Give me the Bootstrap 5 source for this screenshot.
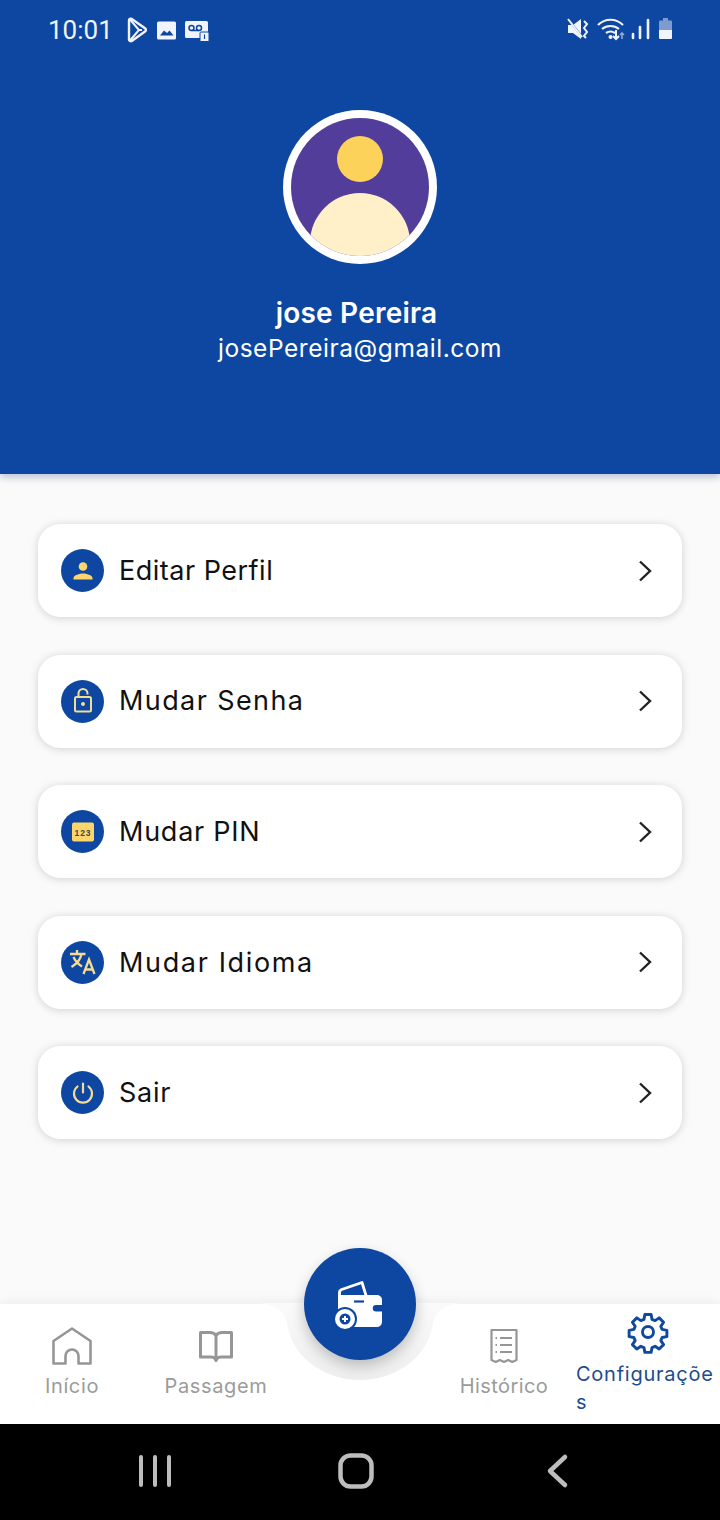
<!DOCTYPE html>
<html lang="pt">
<head>
  <meta charset="UTF-8">
  <meta name="viewport" content="width=device-width, initial-scale=1">
  <title>perfil</title>
  <link href="https://cdn.jsdelivr.net/npm/bootstrap@5.3.3/dist/css/bootstrap.min.css" rel="stylesheet">
  <style>
    body {
      background-color: #fafafa;
      font-family: "Inter", "Open Sans", sans-serif;
      width: 720px;
      height: 1520px;
      overflow: hidden;
    }
    .app-screen { height: 1520px; }
    .top-panel {
      background-color: #0d47a1;
      height: 474px;
      box-shadow: 0 3px 8px rgba(13, 40, 100, .28);
      color: #fff;
      flex: none;
    }
    .status-row {
      height: 60px;
      padding: 0 47px 0 48px;
    }
    .clock { font-family: "Roboto", sans-serif; font-size: 26px; color: #f1f4fa; line-height: 1; margin-right: 14px; }
    .avatar-ring {
      width: 154px;
      height: 154px;
      margin-top: 50px;
      margin-bottom: 30px;
      display: block;
    }
    .user-name { font-size: 28px; font-weight: 600; line-height: 38px; letter-spacing: .2px; padding-right: 7px; }
    .user-mail { font-size: 24.5px; line-height: 32px; letter-spacing: .55px; font-weight: 400; }
    .menu-area {
      padding: 50px 38px 0;
      gap: 37.6px;
    }
    .menu-card {
      height: 93px;
      border: 0;
      border-radius: 22px;
      background: #fff;
      box-shadow: 0 1px 8px rgba(0, 0, 0, .17);
      padding: 0 29px 0 23px;
    }
    .menu-dot {
      width: 43px;
      height: 43px;
      border-radius: 50%;
      background: #0d47a1;
      flex: none;
    }
    .menu-label { font-size: 27px; letter-spacing: .75px; color: #111; margin-left: 15px; padding-top: 1px; font-weight: 400; }
    .label-tight { letter-spacing: .5px; }
    .label-wide { letter-spacing: 1.4px; }
    .label-wider { letter-spacing: 1.65px; }
    .bottom-nav {
      height: 120px;
      background: #fff;
      box-shadow: 0 -3px 10px rgba(0, 0, 0, .05);
      flex: none;
    }
    .notch { position: absolute; left: 230px; top: -1px; width: 260px; height: 90px; }
    .fab {
      position: absolute;
      left: 304px;
      top: -56px;
      width: 112px;
      height: 112px;
      border-radius: 50%;
      background: #0d47a1;
      box-shadow: 0 6px 14px rgba(0, 0, 0, .22);
    }
    .nav-slot {
      width: 144px;
      padding-top: 20px;
      color: #9b9b9b;
      font-size: 20px;
      line-height: 28px;
      letter-spacing: .65px;
      text-align: center;
    }
    .nav-glyph { height: 44px; margin-bottom: 4px; }
    .slot-history { letter-spacing: .4px; }
    .slot-active { padding-top: 6px; color: #1c4c8f; text-align: left; letter-spacing: .75px; margin-bottom: 0; }
    .slot-active .nav-glyph { padding-left: 50px; justify-content: flex-start !important; margin-bottom: 6px; }
    .sys-bar {
      height: 96px;
      background: #000;
      flex: none;
    }
  </style>
</head>
<body>
<div class="app-screen d-flex flex-column">

<div class="top-panel d-flex flex-column align-items-center text-center">
  <!-- barra de status -->
  <div class="status-row d-flex align-items-center justify-content-between w-100">
    <div class="d-flex align-items-center">
      <span class="clock">10:01</span>
      <svg width="84" height="26" viewBox="0 0 84 26" fill="none">
        <path d="M2 3.500c0-1.500 1.500-2.300 2.800-1.600L18 11.300c1.200.7 1.200 2.500 0 3.200L4.800 24c-1.300.7-2.800-.1-2.800-1.600z" stroke="#f1f4fa" stroke-width="2.400" stroke-linejoin="round"/>
        <path d="M3 2.500L12 13 3 23.500M12 13h3" stroke="#f1f4fa" stroke-width="2"/>
        <rect x="30" y="4.500" width="19" height="18" rx="1.500" fill="#f1f4fa"/>
        <path d="M33 18.500l4-5 3 2.500 2.500-2.500 4 5z" fill="#0d47a1"/>
        <rect x="58" y="4" width="23" height="17" rx="1.500" fill="#f1f4fa"/>
        <circle cx="64.500" cy="11" r="2.500" fill="none" stroke="#0d47a1" stroke-width="1.500"/>
        <circle cx="72" cy="11" r="2.500" fill="none" stroke="#0d47a1" stroke-width="1.500"/>
        <path d="M64.500 13.500H72" stroke="#0d47a1" stroke-width="1.500"/>
        <rect x="73" y="15" width="9" height="9.500" rx="1" fill="#f1f4fa" stroke="#0d47a1"/>
        <path d="M77.500 17.500v4.500" stroke="#0d47a1" stroke-width="1.200"/>
      </svg>
    </div>
    <svg width="106" height="26" viewBox="0 1 106 26" fill="none">
      <path d="M1 9h5l8-6v20l-8-6H1z" fill="#f1f4fa"/>
      <path d="M1 3l16 20" stroke="#0d47a1" stroke-width="2"/>
      <path d="M1 3l14 18" stroke="#f1f4fa" stroke-width="2"/>
      <path d="M17 5l3 3-3 4 3 4-3 4 2 2" stroke="#f1f4fa" stroke-width="2"/>
      <path d="M31 9c7-7 18-7 25 0M35 13c5-4 12-4 17 0M39 17c3-2 6-2 9 0" stroke="#f1f4fa" stroke-width="2.200"/>
      <circle cx="43.500" cy="21" r="2" fill="#f1f4fa"/>
      <path d="M49 14v9m-3-3l3 3 3-3" stroke="#f1f4fa" stroke-width="2"/>
      <path d="M55 23v-6m-2 2l2-2 2 2" stroke="#8ea6d2" stroke-width="1.600"/>
      <path d="M66 18v4M73 11v11M81 4v18" stroke="#f1f4fa" stroke-width="2.600" stroke-linecap="round"/>
      <path d="M92 6c0-1 .5-1.500 1.500-1.500H96V2h5v2.500h2.500c1 0 1.500.5 1.500 1.500v8H92z" fill="#7f9bcd"/>
      <path d="M92 14h13v7.500c0 1-.5 1.500-1.500 1.500h-10c-1 0-1.500-.5-1.500-1.500z" fill="#f1f4fa"/>
    </svg>
  </div>

  <svg class="avatar-ring" viewBox="0 0 154 154">
    <defs><clipPath id="faceClip"><circle cx="77" cy="77" r="69"/></clipPath></defs>
    <circle cx="77" cy="77" r="77" fill="#fff"/>
    <circle cx="77" cy="77" r="69" fill="#523d9a"/>
    <circle cx="77" cy="49" r="23" fill="#fdd25a"/>
    <circle cx="77" cy="133" r="50" fill="#fff0c9" clip-path="url(#faceClip)"/>
  </svg>
  <div class="user-name">jose Pereira</div>
  <div class="user-mail">josePereira@gmail.com</div>
</div>

<div class="menu-area d-flex flex-column flex-grow-1">
  <div class="card menu-card flex-row align-items-center">
    <div class="menu-dot d-flex align-items-center justify-content-center">
      <svg width="24" height="24" viewBox="0 0 24 24" fill="#fdd56b"><circle cx="12" cy="7.500" r="4.300"/><path d="M2.500 20.500v-1.500c0-3 6.500-4.500 9.500-4.500s9.500 1.500 9.500 4.500v1.500z"/></svg>
    </div>
    <span class="menu-label label-tight">Editar Perfil</span>
    <svg class="ms-auto" width="16" height="24" viewBox="0 0 16 24" fill="none"><path d="M3 2.500l10 9.500-10 9.500" stroke="#222" stroke-width="2.400"/></svg>
  </div>
  <div class="card menu-card flex-row align-items-center">
    <div class="menu-dot d-flex align-items-center justify-content-center">
      <svg width="24" height="26" viewBox="0 0 24 26" fill="none" stroke="#f5dc94" stroke-width="2"><rect x="4" y="9" width="16" height="14.500" rx="1.500"/><path d="M7.500 9V5.500a4.500 4.500 0 0 1 9 0V6.500"/><circle cx="12" cy="16" r="2" fill="#f5dc94" stroke="none"/></svg>
    </div>
    <span class="menu-label label-wide">Mudar Senha</span>
    <svg class="ms-auto" width="16" height="24" viewBox="0 0 16 24" fill="none"><path d="M3 2.500l10 9.500-10 9.500" stroke="#222" stroke-width="2.400"/></svg>
  </div>
  <div class="card menu-card flex-row align-items-center">
    <div class="menu-dot d-flex align-items-center justify-content-center">
      <svg width="24" height="20" viewBox="0 0 24 20"><rect x="1" y="0.500" width="22" height="19" rx="2" fill="#fdd56b"/><text x="12" y="13.500" text-anchor="middle" font-family="Liberation Sans" font-weight="700" font-size="8.500" letter-spacing="1" fill="#444">123</text></svg>
    </div>
    <span class="menu-label">Mudar PIN</span>
    <svg class="ms-auto" width="16" height="24" viewBox="0 0 16 24" fill="none"><path d="M3 2.500l10 9.500-10 9.500" stroke="#222" stroke-width="2.400"/></svg>
  </div>
  <div class="card menu-card flex-row align-items-center">
    <div class="menu-dot d-flex align-items-center justify-content-center">
      <svg width="28" height="26" viewBox="0 0 28 26" fill="none" stroke="#f5dc94" stroke-width="2.300"><path d="M1 5h15.500M8 1V5M12.500 5C11.500 10.500 7.500 15 2.500 18M4.500 8c1.500 3.500 4.500 7 8.500 9.500"/><path d="M14.500 25l5.500-14.500L25.500 25M16.500 20.500h7"/></svg>
    </div>
    <span class="menu-label label-wider">Mudar Idioma</span>
    <svg class="ms-auto" width="16" height="24" viewBox="0 0 16 24" fill="none"><path d="M3 2.500l10 9.500-10 9.500" stroke="#222" stroke-width="2.400"/></svg>
  </div>
  <div class="card menu-card flex-row align-items-center">
    <div class="menu-dot d-flex align-items-center justify-content-center">
      <svg width="24" height="24" viewBox="0 0 24 24" fill="none" stroke="#f5dc94" stroke-width="2.200" stroke-linecap="round"><path d="M12 2.500v9"/><path d="M6.500 5.500a9 9 0 1 0 11 0"/></svg>
    </div>
    <span class="menu-label">Sair</span>
    <svg class="ms-auto" width="16" height="24" viewBox="0 0 16 24" fill="none"><path d="M3 2.500l10 9.500-10 9.500" stroke="#222" stroke-width="2.400"/></svg>
  </div>
</div>

<div class="bottom-nav d-flex position-relative">
  <svg class="notch" viewBox="0 0 260 90">
    <defs><linearGradient id="notchFill" x1="0" y1="0" x2="0" y2="1"><stop offset="0" stop-color="#fafafa"/><stop offset="1" stop-color="#eeeeee"/></linearGradient></defs>
    <path d="M26 0C42 1 55 6 57 20C62 55 95 77 130 77C165 77 198 55 203 20C205 6 218 1 234 0z" fill="url(#notchFill)"/>
  </svg>

  <div class="nav-slot">
    <div class="nav-glyph d-flex align-items-center justify-content-center">
      <svg width="42" height="42" viewBox="0 0 42 42" fill="none" stroke="#969696" stroke-width="2.600" stroke-linejoin="round"><path d="M2.500 38.500V16L21 3.500 39.500 16v22.500H27.500V31a6.500 6.500 0 0 0-13 0v7.500z"/></svg>
    </div>
    <div>Início</div>
  </div>
  <div class="nav-slot">
    <div class="nav-glyph d-flex align-items-center justify-content-center">
      <svg width="38" height="34" viewBox="0 0 38 34" fill="none" stroke="#969696" stroke-width="3" stroke-linejoin="round"><path d="M3.500 3.500H13Q17 3.500 19 6.500Q21 3.500 25 3.500h9.500V28H24Q20 28 19 31.500Q18 28 14 28H3.500zM19 6.500v25"/></svg>
    </div>
    <div>Passagem</div>
  </div>
  <div class="nav-slot"></div>
  <div class="nav-slot slot-history">
    <div class="nav-glyph d-flex align-items-center justify-content-center">
      <svg width="30" height="36" viewBox="0 0 30 36" fill="none" stroke="#969696" stroke-width="2.200" stroke-linejoin="round"><path d="M2.500 2h25v30l-4.200 2-4.100-2-4.200 2-4.200-2-4.100 2-4.200-2z"/><path d="M11 10h12M11 17h12M11 24h12M6.500 10H8M6.500 17H8M6.500 24H8"/></svg>
    </div>
    <div>Histórico</div>
  </div>
  <div class="nav-slot slot-active">
    <div class="nav-glyph d-flex align-items-center justify-content-center">
      <svg width="44" height="44" viewBox="0 0 24 24" fill="none" stroke="#0f4a9e" stroke-width="1.600" stroke-linejoin="round"><circle cx="12" cy="12" r="3"/><path d="M10.300 2.500h3.400l.5 2.600 1.700.7 2.200-1.500 2.400 2.400-1.500 2.200.7 1.700 2.600.5v3.400l-2.600.5-.7 1.700 1.500 2.200-2.400 2.400-2.200-1.500-1.700.7-.5 2.600h-3.400l-.5-2.600-1.700-.7-2.200 1.500-2.400-2.400 1.500-2.200-.7-1.700-2.600-.5v-3.400l2.600-.5.7-1.700-1.500-2.200 2.400-2.400 2.200 1.500 1.700-.7z"/></svg>
    </div>
    <div>Configuraçõe<br>s</div>
  </div>

  <div class="fab d-flex align-items-center justify-content-center">
    <svg width="60" height="60" viewBox="0 0 60 60" fill="#fff">
      <path d="M9.500 21v-2.500c0-1.500.8-2.500 2.200-3L32 8.500l4 13" fill="none" stroke="#fff" stroke-width="2.800" stroke-linejoin="round"/>
      <path d="M8 21h38c4 0 6 2 6 5v5h-6a3.200 3.200 0 0 0 0 6.500h6V47c0 4-2 6-6 6H20L8 38z"/>
      <path d="M24 27.500h10" stroke="#0d47a1" stroke-width="2.200"/>
      <circle cx="15" cy="45" r="12" fill="#0d47a1"/>
      <circle cx="15" cy="45" r="10" fill="#fff"/>
      <circle cx="15" cy="45" r="5.500" fill="#0d47a1"/>
      <path d="M12 45h6M15 42v6" stroke="#fff" stroke-width="2"/>
    </svg>
  </div>
</div>

<div class="sys-bar">
  <svg width="720" height="96" viewBox="0 0 720 96" fill="none" stroke="#bdbdbd" stroke-linecap="round">
    <path d="M141 33v28M155 33v28M169 33v28" stroke-width="4"/>
    <rect x="340.500" y="31.500" width="31" height="31" rx="10" stroke-width="4.500"/>
    <path d="M565 33l-15 14 15 14" stroke-width="4.500" stroke-linejoin="round"/>
  </svg>
</div>

</div>
<script src="https://cdn.jsdelivr.net/npm/bootstrap@5.3.3/dist/js/bootstrap.bundle.min.js"></script>
</body>
</html>
